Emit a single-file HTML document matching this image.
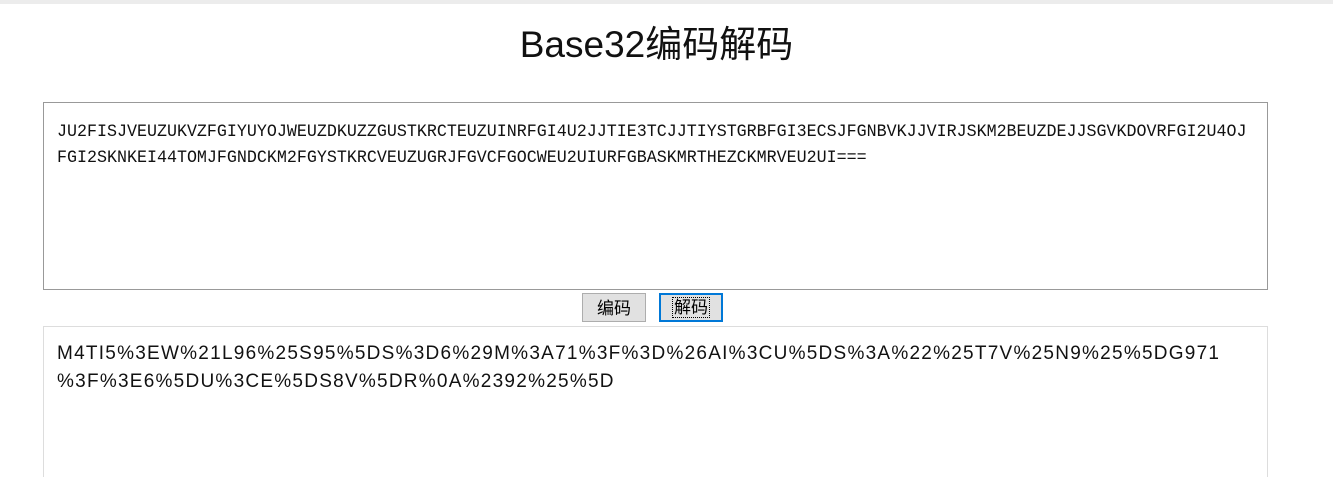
<!DOCTYPE html>
<html style="overflow:hidden;height:477px"><head><meta charset="utf-8"><style>
body{margin:0;width:1333px;height:477px;overflow:hidden;background:#fff;font-family:"Liberation Sans","Noto Sans CJK SC",sans-serif;position:relative}
.bar{position:absolute;left:0;top:0;width:1333px;height:4px;background:#ececec}
h1{position:absolute;left:0;width:1313px;top:20px;margin:0;text-align:center;font-weight:normal;font-size:37px;line-height:50px;color:#111}
.t1{position:absolute;left:43px;top:102px;width:1223px;height:186px;border:1px solid #999}
.t1 div{position:absolute;left:13px;font-family:"Liberation Mono",monospace;font-size:16.67px;color:#111;white-space:nowrap;transform:scaleY(1.05)}
.t2{position:absolute;left:43px;top:326px;width:1223px;height:151px;border:1px solid #ddd;border-bottom:none;box-sizing:content-box}
.t2 div{position:absolute;left:13px;font-size:19px;letter-spacing:1.25px;color:#111;white-space:nowrap}
.b{position:absolute;top:293px;height:29px;font-size:17px;line-height:29px;text-align:center;background:#e1e1e1;border:1px solid #adadad;box-sizing:border-box;color:#000}
</style></head><body>
<div class="bar"></div>
<h1>Base32编码解码</h1>
<div class="t1">
<div style="top:20px">JU2FISJVEUZUKVZFGIYUYOJWEUZDKUZZGUSTKRCTEUZUINRFGI4U2JJTIE3TCJJTIYSTGRBFGI3ECSJFGNBVKJJVIRJSKM2BEUZDEJJSGVKDOVRFGI2U4OJ</div>
<div style="top:46px">FGI2SKNKEI44TOMJFGNDCKM2FGYSTKRCVEUZUGRJFGVCFGOCWEU2UIURFGBASKMRTHEZCKMRVEU2UI===</div>
</div>
<div class="b" style="left:582px;width:64px">编码</div>
<div class="b" style="left:659px;width:64px;border:2px solid #0078d7;line-height:26px"><span style="outline:1px dotted #000;padding:0 1px">解码</span></div>
<div class="t2">
<div style="top:16px">M4TI5%3EW%21L96%25S95%5DS%3D6%29M%3A71%3F%3D%26AI%3CU%5DS%3A%22%25T7V%25N9%25%5DG971</div>
<div style="top:44px">%3F%3E6%5DU%3CE%5DS8V%5DR%0A%2392%25%5D</div>
</div>
</body></html>
